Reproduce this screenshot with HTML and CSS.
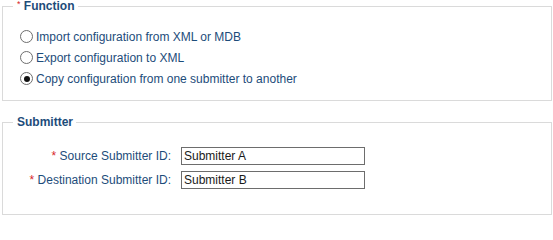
FILE: index.html
```html
<!DOCTYPE html>
<html>
<head>
<meta charset="utf-8">
<link rel="stylesheet" href="styles.css">
</head>
<body>
<fieldset class="group group-function">
  <legend class="group-title"><span class="req">*</span> Function</legend>
  <div class="options">
    <label class="option"><input type="radio" name="fn" class="radio">Import configuration from XML or MDB</label>
    <label class="option"><input type="radio" name="fn" class="radio">Export configuration to XML</label>
    <label class="option"><input type="radio" name="fn" class="radio" checked>Copy configuration from one submitter to another</label>
  </div>
</fieldset>
<fieldset class="group group-submitter">
  <legend class="group-title">Submitter</legend>
  <div class="fields">
    <label class="field-label" for="src"><span class="req">*</span> Source Submitter ID:</label>
    <input class="field-input" id="src" type="text" value="Submitter A">
    <label class="field-label" for="dst"><span class="req">*</span> Destination Submitter ID:</label>
    <input class="field-input" id="dst" type="text" value="Submitter B">
  </div>
</fieldset>
</body>
</html>
```
FILE: styles.css
```css
html, body {
  margin: 0;
  padding: 0;
  background: #ffffff;
}
body {
  font-family: "Liberation Sans", Arial, sans-serif;
  font-size: 12px;
  color: #1d4c7a;
}
.group {
  margin: 0 0 0 2px;
  width: 550px;
  box-sizing: border-box;
  border: 1px solid #dadada;
  padding: 0;
  min-width: 0;
}
.group-function {
  padding: 14px 0 11px 0;
}
.group-submitter {
  margin-top: 15px;
  padding: 19px 0 25px 0;
}
.group-title {
  font-weight: bold;
  font-size: 12px;
  line-height: 12px;
  color: #1d4c7a;
  padding: 0 3px 0 4px;
  margin-left: 10px;
}
.req {
  color: #d8262a;
  font-weight: normal;
}
.group-title .req {
  font-size: 9px;
  line-height: 0;
  vertical-align: 3px;
}
.options {
  display: flex;
  flex-direction: column;
}
.option {
  display: flex;
  align-items: center;
  height: 21px;
  padding-left: 17px;
  white-space: pre;
}
.radio {
  appearance: none;
  -webkit-appearance: none;
  width: 13px;
  height: 13px;
  margin: 0 3px 0 0;
  border: 1px solid #6e6e6e;
  border-radius: 50%;
  background: #ffffff;
  box-sizing: border-box;
  position: relative;
  flex: none;
}
.radio:checked::after {
  content: "";
  position: absolute;
  left: 2.5px;
  top: 2.5px;
  width: 6px;
  height: 6px;
  border-radius: 50%;
  background: #111111;
}
.fields {
  display: grid;
  grid-template-columns: 168px 184px;
  column-gap: 10px;
  row-gap: 6px;
  align-items: center;
}
.field-label {
  text-align: right;
  white-space: pre;
}
.field-input {
  height: 18px;
  width: 184px;
  box-sizing: border-box;
  border: 1px solid #6d6d6d;
  padding: 0 2px;
  margin: 0;
  font-family: "Liberation Sans", Arial, sans-serif;
  font-size: 12px;
  color: #1a1a1a;
  outline: none;
}
```
